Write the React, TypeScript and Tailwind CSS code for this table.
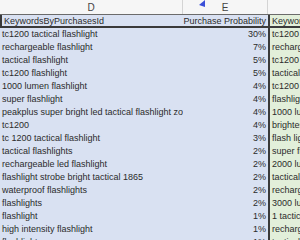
const rows: [string, string, string][] = [
    ['tc1200 tactical flashlight', '30%', 'tc1200'],
    ['rechargeable flashlight', '7%', 'rechargeable'],
    ['tactical flashlight', '5%', 'tc1200'],
    ['tc1200 flashlight', '5%', 'tactical'],
    ['1000 lumen flashlight', '4%', 'tc1200'],
    ['super flashlight', '4%', 'flashlight'],
    ['peakplus super bright led tactical flashlight zo', '4%', '1000 lumen'],
    ['tc1200', '4%', 'brightest'],
    ['tc 1200 tactical flashlight', '3%', 'flash light'],
    ['tactical flashlights', '2%', 'super flash'],
    ['rechargeable led flashlight', '2%', '2000 lumen'],
    ['flashlight strobe bright tactical 1865', '2%', 'tactical'],
    ['waterproof flashlights', '2%', 'rechargeable'],
    ['flashlights', '2%', '3000 lumen'],
    ['flashlight', '1%', '1 tactical'],
    ['high intensity flashlight', '1%', 'rechargeable'],
    ['flashlight', '1%', 'tactical'],
]

const App = () => {
    return (
        <div className="w-[300px] h-[240px] overflow-hidden bg-white text-[#2b2b2b] text-[9px] leading-[13px] font-['Liberation_Sans',Arial,sans-serif]">
            {/* column letters */}
            <div className="flex h-[15px] bg-[#f6f6f6] border-b border-[#6b6b6b] text-[#444]">
                <div className="w-[183px] shrink-0 flex items-center justify-center border-r border-[#d4d4d4] text-[10px]">D</div>
                <div className="relative w-[85px] shrink-0 flex items-center justify-center border-r border-[#d4d4d4] text-[10px]">
                    <svg className="absolute left-[16px] top-0" width="7" height="8" viewBox="0 0 7 8">
                        <polygon points="6,0 6,7 0,5" fill="#3b4fd8" />
                    </svg>
                    E
                </div>
                <div className="flex-1" />
            </div>
            {/* header row */}
            <div className="flex h-[13px] bg-[#d9e1f2] border-b-2 border-[#3a3a3a]">
                <div className="w-[183px] shrink-0 pl-[2px] border-l-2 border-[#3a3a3a] truncate">KeywordsByPurchasesId</div>
                <div className="w-[85px] shrink-0 pr-[2px] text-right whitespace-nowrap">Purchase Probability</div>
                <div className="flex-1 border-l-2 border-[#3a3a3a] bg-[#e2efda] pl-[2px] whitespace-nowrap overflow-hidden">KeywordsByPurchasesId</div>
            </div>
            {/* data rows */}
            {rows.map(([kw, p, next], i) => (
                <div key={`row_${i}`} className="flex h-[13px] bg-[#d9e1f2]">
                    <div className="w-[183px] shrink-0 pl-[2px] whitespace-nowrap overflow-hidden">{kw}</div>
                    <div className="w-[85px] shrink-0 pr-[2px] text-right">{p}</div>
                    <div className="flex-1 border-l-2 border-[#3a3a3a] bg-[#e2efda] pl-[2px] whitespace-nowrap overflow-hidden">{next}</div>
                </div>
            ))}
        </div>
    )
}

export default App
